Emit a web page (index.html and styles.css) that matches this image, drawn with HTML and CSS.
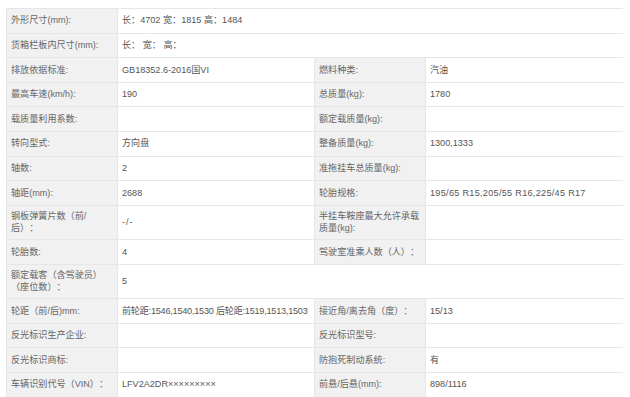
FILE: index.html
```html
<!DOCTYPE html>
<html lang="zh-CN">
<head>
<meta charset="utf-8">
<title>车辆参数</title>
<link rel="stylesheet" href="styles.css">
</head>
<body>
<table class="spec">
  <colgroup>
    <col class="c-label"><col class="c-value"><col class="c-label"><col class="c-value2">
  </colgroup>
  <tbody>
    <tr><td class="lb">外形尺寸(mm):</td><td class="vl" colspan="3">长：4702 宽：1815 高：1484</td></tr>
    <tr><td class="lb">货箱栏板内尺寸(mm):</td><td class="vl" colspan="3">长：&nbsp;宽：&nbsp;高：</td></tr>
    <tr><td class="lb">排放依据标准:</td><td class="vl">GB18352.6-2016国VI</td><td class="lb">燃料种类:</td><td class="vl">汽油</td></tr>
    <tr><td class="lb">最高车速(km/h):</td><td class="vl">190</td><td class="lb">总质量(kg):</td><td class="vl">1780</td></tr>
    <tr><td class="lb">载质量利用系数:</td><td class="vl"></td><td class="lb">额定载质量(kg):</td><td class="vl"></td></tr>
    <tr><td class="lb">转向型式:</td><td class="vl">方向盘</td><td class="lb">整备质量(kg):</td><td class="vl">1300,1333</td></tr>
    <tr><td class="lb">轴数:</td><td class="vl">2</td><td class="lb">准拖挂车总质量(kg):</td><td class="vl"></td></tr>
    <tr><td class="lb">轴距(mm):</td><td class="vl">2688</td><td class="lb">轮胎规格:</td><td class="vl vl-wide">195/65 R15,205/55 R16,225/45 R17</td></tr>
    <tr><td class="lb">钢板弹簧片数（前/后）：</td><td class="vl vl-dash">-/-</td><td class="lb">半挂车鞍座最大允许承载质量(kg):</td><td class="vl"></td></tr>
    <tr><td class="lb">轮胎数:</td><td class="vl">4</td><td class="lb">驾驶室准乘人数（人）：</td><td class="vl"></td></tr>
    <tr><td class="lb">额定载客（含驾驶员）（座位数）：</td><td class="vl" colspan="3">5</td></tr>
    <tr><td class="lb">轮距（前/后)mm:</td><td class="vl vl-tight">前轮距:1546,1540,1530 后轮距:1519,1513,1503</td><td class="lb">接近角/离去角（度）：</td><td class="vl">15/13</td></tr>
    <tr><td class="lb">反光标识生产企业:</td><td class="vl"></td><td class="lb">反光标识型号:</td><td class="vl"></td></tr>
    <tr><td class="lb">反光标识商标:</td><td class="vl"></td><td class="lb">防抱死制动系统:</td><td class="vl">有</td></tr>
    <tr><td class="lb">车辆识别代号（VIN）：</td><td class="vl">LFV2A2DR×××××××××</td><td class="lb">前悬/后悬(mm):</td><td class="vl">898/1116</td></tr>
  </tbody>
</table>
</body>
</html>
```

FILE: styles.css
```css
html, body {
  background: #ffffff;
}
body {
  margin: 8px 7px 0 6px;
  font-family: "Liberation Sans", "Noto Sans CJK SC", sans-serif;
  font-size: 9.1px;
  line-height: 12.7px;
  color: #666;
  text-spacing-trim: space-all;
}
.spec {
  width: 617px;
  table-layout: fixed;
  border-collapse: collapse;
}
.c-label { width: 111px; }
.c-value { width: 197px; }
.c-value2 { width: 198px; }
.spec tr {
  height: 24.6px;
}
.spec td {
  border: 1px solid #e6e6e6;
  padding: 4px 4px;
  vertical-align: middle;
}
.lb {
  background: #f1f1f1;
  color: #666;
  padding-left: 5px;
}
.vl {
  background: #ffffff;
  color: #555;
  white-space: nowrap;
}
.vl-tight {
  letter-spacing: -0.22px;
}
.vl-wide {
  letter-spacing: 0.3px;
}
.vl-dash {
  letter-spacing: 1px;
}
```
